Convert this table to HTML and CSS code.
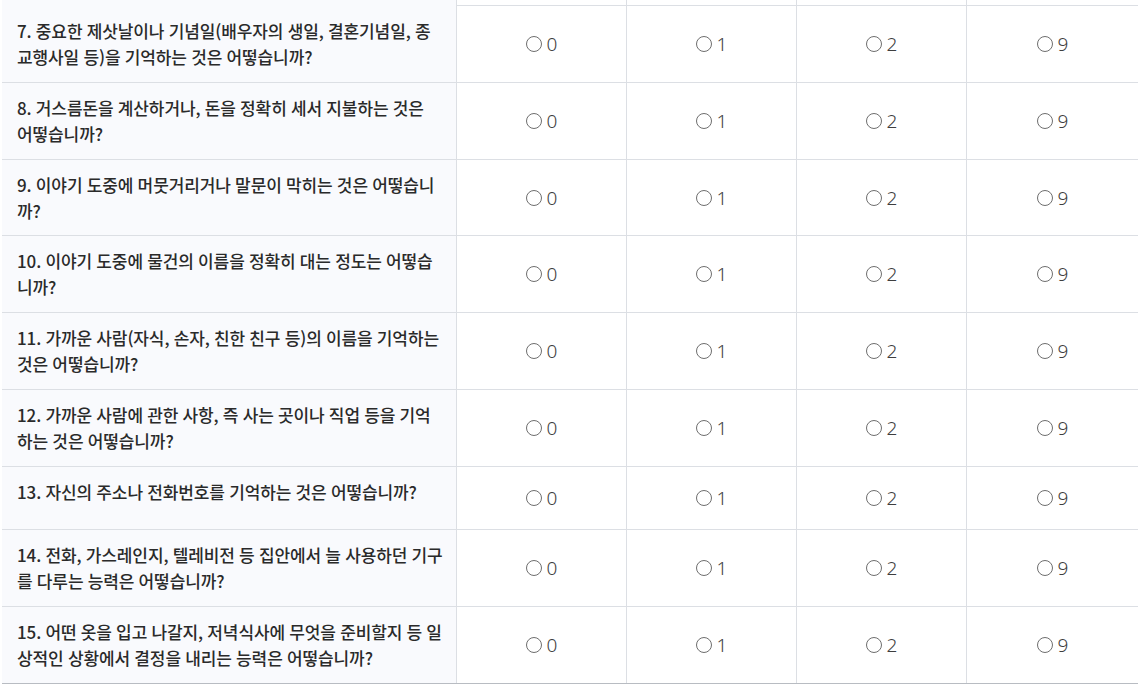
FILE: index.html
```html
<!DOCTYPE html>
<html lang="ko">
<head>
<meta charset="utf-8">
<link rel="stylesheet" href="styles.css">
</head>
<body>
<div class="survey">
  <div class="row row-partial">
    <div class="q"></div><div class="opt"></div><div class="opt"></div><div class="opt"></div><div class="opt"></div>
  </div>
  <div class="row">
    <div class="q">7. 중요한 제삿날이나 기념일(배우자의 생일, 결혼기념일, 종<br>교행사일 등)을 기억하는 것은 어떻습니까?</div>
    <label class="opt"><input type="radio" name="q7"><span>0</span></label>
    <label class="opt"><input type="radio" name="q7"><span>1</span></label>
    <label class="opt"><input type="radio" name="q7"><span>2</span></label>
    <label class="opt"><input type="radio" name="q7"><span>9</span></label>
  </div>
  <div class="row">
    <div class="q">8. 거스름돈을 계산하거나, 돈을 정확히 세서 지불하는 것은<br>어떻습니까?</div>
    <label class="opt"><input type="radio" name="q8"><span>0</span></label>
    <label class="opt"><input type="radio" name="q8"><span>1</span></label>
    <label class="opt"><input type="radio" name="q8"><span>2</span></label>
    <label class="opt"><input type="radio" name="q8"><span>9</span></label>
  </div>
  <div class="row">
    <div class="q">9. 이야기 도중에 머뭇거리거나 말문이 막히는 것은 어떻습니<br>까?</div>
    <label class="opt"><input type="radio" name="q9"><span>0</span></label>
    <label class="opt"><input type="radio" name="q9"><span>1</span></label>
    <label class="opt"><input type="radio" name="q9"><span>2</span></label>
    <label class="opt"><input type="radio" name="q9"><span>9</span></label>
  </div>
  <div class="row">
    <div class="q">10. 이야기 도중에 물건의 이름을 정확히 대는 정도는 어떻습<br>니까?</div>
    <label class="opt"><input type="radio" name="q10"><span>0</span></label>
    <label class="opt"><input type="radio" name="q10"><span>1</span></label>
    <label class="opt"><input type="radio" name="q10"><span>2</span></label>
    <label class="opt"><input type="radio" name="q10"><span>9</span></label>
  </div>
  <div class="row">
    <div class="q">11. 가까운 사람(자식, 손자, 친한 친구 등)의 이름을 기억하는<br>것은 어떻습니까?</div>
    <label class="opt"><input type="radio" name="q11"><span>0</span></label>
    <label class="opt"><input type="radio" name="q11"><span>1</span></label>
    <label class="opt"><input type="radio" name="q11"><span>2</span></label>
    <label class="opt"><input type="radio" name="q11"><span>9</span></label>
  </div>
  <div class="row">
    <div class="q">12. 가까운 사람에 관한 사항, 즉 사는 곳이나 직업 등을 기억<br>하는 것은 어떻습니까?</div>
    <label class="opt"><input type="radio" name="q12"><span>0</span></label>
    <label class="opt"><input type="radio" name="q12"><span>1</span></label>
    <label class="opt"><input type="radio" name="q12"><span>2</span></label>
    <label class="opt"><input type="radio" name="q12"><span>9</span></label>
  </div>
  <div class="row">
    <div class="q">13. 자신의 주소나 전화번호를 기억하는 것은 어떻습니까?</div>
    <label class="opt"><input type="radio" name="q13"><span>0</span></label>
    <label class="opt"><input type="radio" name="q13"><span>1</span></label>
    <label class="opt"><input type="radio" name="q13"><span>2</span></label>
    <label class="opt"><input type="radio" name="q13"><span>9</span></label>
  </div>
  <div class="row">
    <div class="q">14. 전화, 가스레인지, 텔레비전 등 집안에서 늘 사용하던 기구<br>를 다루는 능력은 어떻습니까?</div>
    <label class="opt"><input type="radio" name="q14"><span>0</span></label>
    <label class="opt"><input type="radio" name="q14"><span>1</span></label>
    <label class="opt"><input type="radio" name="q14"><span>2</span></label>
    <label class="opt"><input type="radio" name="q14"><span>9</span></label>
  </div>
  <div class="row row-last">
    <div class="q">15. 어떤 옷을 입고 나갈지, 저녁식사에 무엇을 준비할지 등 일<br>상적인 상황에서 결정을 내리는 능력은 어떻습니까?</div>
    <label class="opt"><input type="radio" name="q15"><span>0</span></label>
    <label class="opt"><input type="radio" name="q15"><span>1</span></label>
    <label class="opt"><input type="radio" name="q15"><span>2</span></label>
    <label class="opt"><input type="radio" name="q15"><span>9</span></label>
  </div>
</div>
</body>
</html>
```

FILE: styles.css
```css
html, body {
  margin: 0;
  padding: 0;
  background: #ffffff;
}

body {
  font-family: "Noto Sans CJK KR", "Noto Sans", sans-serif;
  overflow: hidden;
}

.survey {
  width: 1136px;
  margin-left: 2px;
}

.row {
  display: grid;
  grid-template-columns: 454px 170px 170px 170px 172px;
  border-bottom: 1px solid #dcdfe4;
}

.row-partial {
  height: 5px;
}

.row-last {
  border-bottom-color: #b8bcc2;
}

.q {
  background: #f9fafd;
  padding: 12px 3px 12px 15px;
  font-size: 17px;
  line-height: 25.9px;
  font-weight: 500;
  letter-spacing: -0.1px;
  word-spacing: -0.4px;
  color: #2a2a2a;
}

.row-partial .q {
  padding: 0;
}

.opt {
  box-sizing: border-box;
  border-left: 1px solid #dcdfe4;
  display: flex;
  align-items: center;
  justify-content: center;
  padding: 18px 0;
  font-family: "Noto Sans", sans-serif;
  font-weight: 300;
  font-size: 19px;
  line-height: 26px;
  color: #3e3e3e;
}

.opt input {
  appearance: none;
  -webkit-appearance: none;
  box-sizing: border-box;
  width: 16px;
  height: 16px;
  margin: 0 5px 0 0;
  border: 1.8px solid #6e6e6e;
  border-radius: 50%;
  background: #fff;
}
```
